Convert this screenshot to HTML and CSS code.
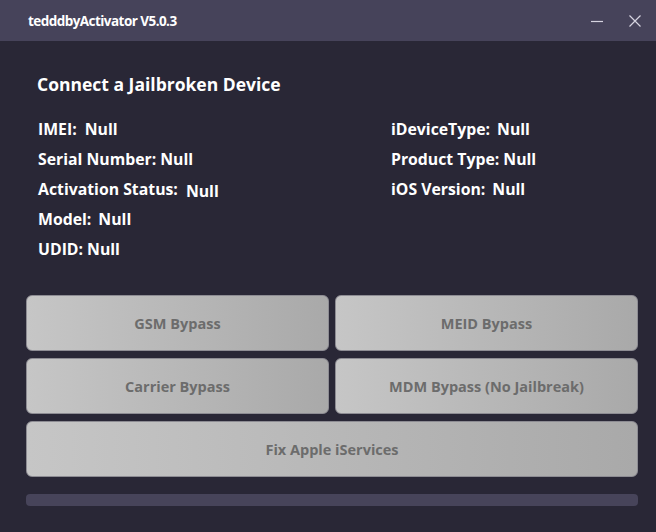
FILE: index.html
```html
<!DOCTYPE html>
<html>
<head>
<meta charset="utf-8">
<link rel="stylesheet" href="styles.css">
</head>
<body>
<div class="window">
  <header class="titlebar">
    <span class="app-title">tedddbyActivator V5.0.3</span>
    <div class="controls">
      <svg class="ctl" width="14" height="14" viewBox="0 0 14 14"><path d="M1 7.5H13" stroke="#d6d4e0" stroke-width="1.2"/></svg>
      <svg class="ctl" width="14" height="14" viewBox="0 0 14 14"><path d="M1.5 1.5L12.5 12.5M12.5 1.5L1.5 12.5" stroke="#d6d4e0" stroke-width="1.2"/></svg>
    </div>
  </header>
  <main class="content">
    <h1 class="heading">Connect a Jailbroken Device</h1>
    <div class="info">
      <div class="col">
        <div class="row"><span>IMEI:</span><span class="val gap-9">Null</span></div>
        <div class="row"><span>Serial Number:</span><span class="val gap-5">Null</span></div>
        <div class="row"><span>Activation Status:</span><span class="val gap-9 low">Null</span></div>
        <div class="row"><span>Model:</span><span class="val gap-8">Null</span></div>
        <div class="row"><span>UDID:</span><span class="val gap-4">Null</span></div>
      </div>
      <div class="col">
        <div class="row"><span>iDeviceType:</span><span class="val gap-8">Null</span></div>
        <div class="row"><span>Product Type:</span><span class="val gap-5">Null</span></div>
        <div class="row"><span>iOS Version:</span><span class="val gap-8">Null</span></div>
      </div>
    </div>
    <div class="buttons">
      <button class="btn">GSM Bypass</button>
      <button class="btn">MEID Bypass</button>
      <button class="btn">Carrier Bypass</button>
      <button class="btn">MDM Bypass (No Jailbreak)</button>
      <button class="btn wide">Fix Apple iServices</button>
    </div>
    <div class="progress"></div>
  </main>
</div>
</body>
</html>
```
FILE: styles.css
```css
* { box-sizing: border-box; }
html, body {
  margin: 0;
  padding: 0;
  width: 656px;
  height: 532px;
  overflow: hidden;
  background: #292736;
  font-family: "Open Sans", "Noto Sans", sans-serif;
}
.window {
  display: flex;
  flex-direction: column;
  height: 532px;
}
.titlebar {
  height: 41px;
  background: #46435a;
  display: flex;
  align-items: center;
  justify-content: space-between;
  padding: 0 14px 0 28px;
}
.app-title {
  color: #ffffff;
  font-weight: 700;
  font-size: 13.5px;
  letter-spacing: -0.55px;
}
.controls {
  display: flex;
  gap: 24px;
  align-items: center;
}
.ctl { display: block; }
.content {
  padding: 30px 18px 0 26px;
  display: flex;
  flex-direction: column;
}
.heading {
  margin: 0 0 0 11px;
  color: #ffffff;
  font-size: 17.5px;
  font-weight: 700;
  letter-spacing: 0;
  line-height: 26px;
}
.info {
  display: grid;
  grid-template-columns: 353px 1fr;
  margin: 17px 0 0 12px;
}
.row {
  height: 30px;
  line-height: 30px;
  color: #ffffff;
  font-size: 15.8px;
  font-weight: 700;
  letter-spacing: 0;
  white-space: nowrap;
}
.val { display: inline-block; }
.gap-9 { margin-left: 8px; }
.gap-8 { margin-left: 7px; }
.gap-5 { margin-left: 4px; }
.gap-4 { margin-left: 4px; }
.low { vertical-align: -2px; }
.buttons {
  margin-top: 31px;
  display: grid;
  grid-template-columns: 1fr 1fr;
  column-gap: 6px;
  row-gap: 7px;
}
.btn {
  height: 56px;
  border: 1px solid #8d8c93;
  border-radius: 6px;
  background: linear-gradient(to right, #c6c6c6, #a9a9a9);
  color: #6c6c6c;
  font-family: "Open Sans", "Noto Sans", sans-serif;
  font-size: 14.5px;
  font-weight: 700;
  letter-spacing: 0;
  padding: 0;
}
.btn.wide { grid-column: 1 / span 2; }
.progress {
  margin-top: 17px;
  height: 12px;
  border-radius: 4px;
  background: #47445a;
}
```
